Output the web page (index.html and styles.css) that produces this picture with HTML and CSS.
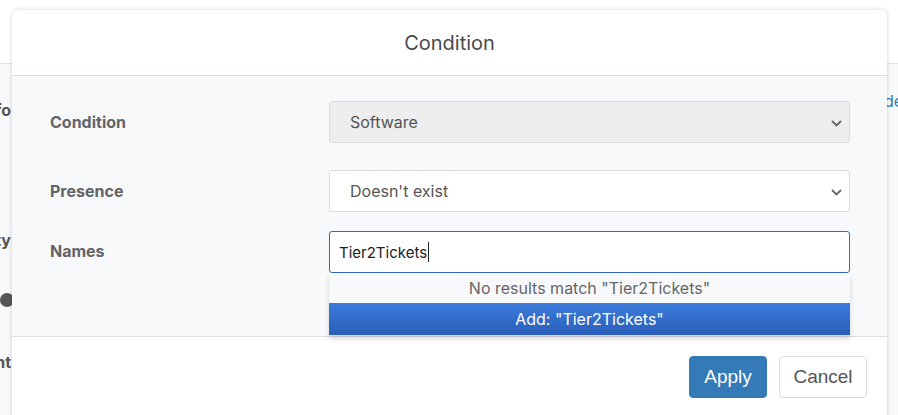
FILE: index.html
```html
<!DOCTYPE html>
<html>
<head>
<meta charset="utf-8">
<link rel="stylesheet" href="styles.css">
</head>
<body>
<div class="page">
  <div class="page-top"></div>
  <div class="page-main">
    <div class="page-labels">
      <div class="plabel l1"><span>Info</span></div>
      <div class="plabel l2"><span>Priority</span></div>
      <div class="plabel l3"><span>Owner</span><span class="dot"></span></div>
      <div class="plabel l4"><span>Content</span></div>
    </div>
    <div class="page-right"><span class="plink">details</span></div>
  </div>
</div>

<div class="modal">
  <div class="modal-header">Condition</div>
  <div class="modal-body">
    <div class="row">
      <div class="label">Condition</div>
      <div class="select disabled"><span>Software</span>
        <svg class="chev" width="11" height="7" viewBox="0 0 11 7"><path d="M1 1l4.5 4.5L10 1" fill="none" stroke="#666" stroke-width="1.8"/></svg>
      </div>
    </div>
    <div class="row r2">
      <div class="label">Presence</div>
      <div class="select"><span>Doesn't exist</span>
        <svg class="chev" width="11" height="7" viewBox="0 0 11 7"><path d="M1 1l4.5 4.5L10 1" fill="none" stroke="#666" stroke-width="1.8"/></svg>
      </div>
    </div>
    <div class="row r3">
      <div class="label">Names</div>
      <div class="combo">
        <div class="input"><span>Tier2Tickets</span><span class="caret"></span></div>
        <div class="dropdown">
          <div class="no-results">No results match "Tier2Tickets"</div>
          <div class="add">Add: "Tier2Tickets"</div>
        </div>
      </div>
    </div>
  </div>
  <div class="modal-footer">
    <button class="btn primary">Apply</button>
    <button class="btn">Cancel</button>
  </div>
</div>
</body>
</html>
```
FILE: styles.css
```css
* { box-sizing: border-box; }
html, body { margin: 0; padding: 0; }
body {
  width: 898px;
  height: 415px;
  overflow: hidden;
  position: relative;
  font-family: Inter, "Noto Sans", sans-serif;
  background: #f8f9fb;
}
.page { display: flex; flex-direction: column; height: 415px; }
.page-top { height: 64px; background: #fff; border-bottom: 1px solid #dedfe2; flex: none; }
.page-main { flex: 1; display: flex; justify-content: space-between; background: #f8f9fb; }
.page-labels { width: 11px; display: flex; flex-direction: column; }
.plabel {
  display: flex; justify-content: flex-end; align-items: center;
  font-weight: 700; font-size: 16px; color: #555; white-space: nowrap; height: 20px;
}
.l1 { margin-top: 36px; }
.l2 { margin-top: 110px; }
.l3 { margin-top: 40px; gap: 3px; margin-right: -3px; }
.l4 { margin-top: 42px; }
.dot { width: 14px; height: 14px; border-radius: 50%; background: #555; flex: none; }
.page-right { width: 14px; overflow: hidden; }
.plink { display: block; margin-top: 27px; color: #337ab7; font-size: 16px; white-space: nowrap; }

.modal {
  position: absolute;
  left: 12px; top: 10px;
  width: 875px; height: 420px;
  background: #fff;
  border-radius: 6px;
  box-shadow: 0 0 4px rgba(0,0,0,0.18);
  display: flex; flex-direction: column;
  z-index: 1;
}
.modal-header {
  height: 66px;
  border-bottom: 1px solid #dcdde0;
  display: flex; align-items: center; justify-content: center;
  font-size: 20px; color: #4a4a4a;
  flex: none;
}
.modal-body {
  background: #f8f9fb;
  padding: 25px 37px 63px 38px;
  border-bottom: 1px solid #dcdde0;
  flex: none;
}
.row { display: flex; align-items: center; }
.r2 { margin-top: 27px; }
.r3 { margin-top: 19px; align-items: flex-start; }
.label { width: 279px; font-weight: 700; font-size: 16px; color: #636467; flex: none; }
.r3 .label { margin-top: 10px; }
.select {
  flex: 1; height: 42px;
  border: 1px solid #dcdde0; border-radius: 3px; background: #fff;
  display: flex; align-items: center; justify-content: space-between;
  padding: 0 7px 0 20px;
  font-size: 16px; color: #555;
}
.select.disabled { background: #eeeeee; }
.chev { display: block; margin-top: 2px; }
.combo { flex: 1; position: relative; }
.input {
  height: 42px; border: 1px solid #2e6db4; border-radius: 3px; background: #fff;
  display: flex; align-items: center; padding-left: 9px;
  font-size: 15px; color: #222;
}
.caret { width: 1px; height: 20px; background: #222; margin-left: 1px; }
.dropdown {
  position: absolute; left: 0; right: 0; top: 42px;
  box-shadow: 0 4px 5px rgba(0,0,0,0.15);
  z-index: 2;
}
.no-results {
  height: 30px; background: #f8f9fb; color: #666;
  display: flex; align-items: center; justify-content: center; font-size: 16px;
}
.add {
  height: 32px; color: #fff;
  background: linear-gradient(#3a7ad9 10%, #2a5fba 95%);
  display: flex; align-items: center; justify-content: center; font-size: 16px;
}
.modal-footer {
  display: flex; justify-content: flex-end; gap: 12px;
  padding: 19px 20px 0 0;
}
.btn {
  height: 42px; border-radius: 4px; border: 1px solid #dcdde0; background: #fff;
  font-family: "Liberation Sans", Arial, sans-serif; font-size: 19px; color: #555;
  padding: 0 12px; width: 88px;
}
.btn.primary { background: #337ab7; border-color: #337ab7; color: #fff; width: 78px; }
```
